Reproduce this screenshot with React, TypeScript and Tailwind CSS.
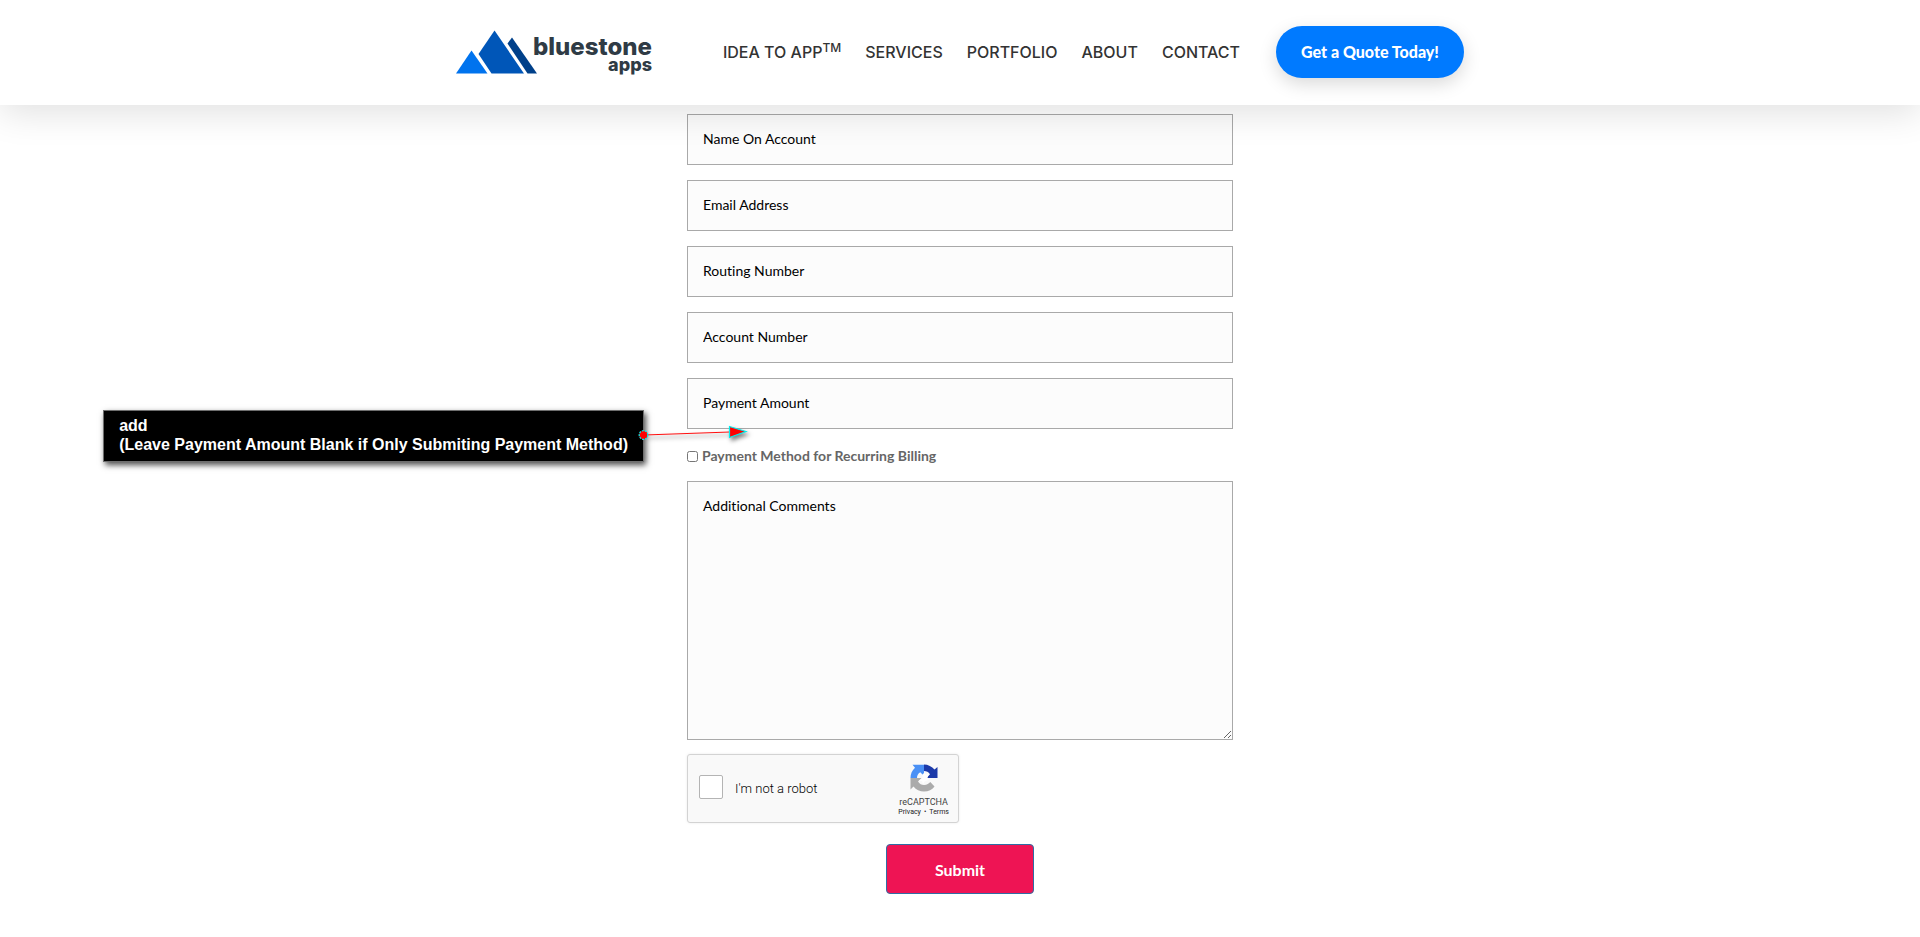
import React from "react";

const fields = [
  { id: "name", label: "Name On Account", type: "text" },
  { id: "email", label: "Email Address", type: "email" },
  { id: "routing", label: "Routing Number", type: "text" },
  { id: "account", label: "Account Number", type: "text" },
];

const control =
  "block w-full border border-[#a9a9a9] bg-[#fcfcfc] px-[15px] text-sm text-black placeholder:text-black placeholder:opacity-100 outline-none";

function Logo() {
  return (
    <a href="#" aria-label="bluestone apps" className="flex shrink-0 text-[#2f3b45]">
      <svg viewBox="0 0 81 44" className="h-11 w-[81px] shrink-0" aria-hidden="true">
        <path d="M0 43.5 15.5 20.5 31.5 43.5Z" fill="#0073ee" />
        <path d="M22.5 24 38.5 0.5 68 43.5H35.5Z" fill="#0056b8" />
        <path d="M51.5 13.5 56 7.5 81 43.5H71.5Z" fill="#00408a" />
      </svg>
      <span className="-ml-1 flex flex-col items-end pt-[7px] font-['Inter'] font-extrabold">
        <span className="text-2xl leading-5">bluestone</span>
        <span className="text-lg leading-4">apps</span>
      </span>
    </a>
  );
}

function Header() {
  const link = "whitespace-nowrap hover:text-[#007aff]";
  return (
    <header className="sticky top-0 z-10 bg-white shadow-[0_8px_34px_rgba(0,0,0,0.12)]">
      <div className="mx-auto flex h-[105px] max-w-[1008px] items-center pb-px">
        <Logo />
        <nav className="mr-9 ml-auto flex gap-6 font-['Inter'] text-base font-medium text-[#333]">
          <a href="#" className={link}>
            IDEA TO APP<sup className="text-xs">TM</sup>
          </a>
          <a href="#" className={link}>SERVICES</a>
          <a href="#" className={link}>PORTFOLIO</a>
          <a href="#" className={link}>ABOUT</a>
          <a href="#" className={link}>CONTACT</a>
        </nav>
        <a
          href="#"
          className="flex h-[52px] w-[188px] shrink-0 items-center justify-center rounded-full bg-[#007aff] text-base font-black text-white shadow-[0_6px_18px_rgba(0,0,0,0.15)]"
        >
          Get a Quote Today!
        </a>
      </div>
    </header>
  );
}

function Note() {
  return (
    <div className="pointer-events-none absolute top-8 right-full mr-[43px] border border-[#6e6e6e] bg-black px-[15px] pt-[5px] pb-[7px] font-['Liberation_Sans'] text-base leading-[19px] font-bold whitespace-nowrap text-white shadow-[2px_3px_6px_rgba(0,0,0,0.7)]">
      <p>add</p>
      <p>(Leave Payment Amount Blank if Only Submiting Payment Method)</p>
      <svg
        viewBox="0 0 120 30"
        className="absolute top-[9px] -right-[115px] h-[30px] w-[120px]"
        aria-hidden="true"
      >
        <g className="drop-shadow-[2px_3px_2px_rgba(0,0,0,0.5)]">
          <path d="M6 15 92 12" stroke="#ff1010" strokeWidth="1.2" />
          <path d="M91.5 6.5 108 11.5 91.5 17.5Z" fill="#f00" stroke="#00f0f0" strokeWidth="1.2" />
        </g>
        <circle cx="5.5" cy="15" r="4.3" fill="#f00" stroke="#00f0f0" strokeWidth="1.2" strokeDasharray="2 1" />
      </svg>
    </div>
  );
}

function Captcha() {
  return (
    <div className="flex h-[69px] w-[272px] items-center rounded-[3px] border border-[#d3d3d3] bg-[#f9f9f9] pr-[9px] pl-[11px] font-['Roboto'] shadow-[0_0_3px_rgba(0,0,0,0.08)]">
      <input
        id="robot"
        type="checkbox"
        className="mb-1 size-6 appearance-none rounded-xs border border-[#b4b4b4] bg-white checked:bg-[#4a90e2]"
      />
      <label htmlFor="robot" className="ml-3 text-[13px] font-light text-black">
        I'm not a robot
      </label>
      <div className="ml-auto flex flex-col items-center pt-1">
        <svg viewBox="0 0 28 28" className="size-7" aria-hidden="true">
          <path d="M14 0.5C18 0.5 22 2.5 24.5 5.5L27.5 3V14H16.5L20 10.3C18.5 8 16.5 7 14 7Z" fill="#1c3aa9" />
          <path d="M0.5 14C0.5 10 2 6.5 5 3.8L2.5 0.8H14V12L10.3 8.2C8 9.5 7 11.5 7 14Z" fill="#4a90f5" />
          <path d="M14 27.5C10 27.5 6 25.8 3.5 22.5L0.5 25.5V14H11.5L8 17.5C9.5 20 11.5 21 14 21C17 21 19 19.5 20.3 18L24.5 22.5C22 25.7 18.5 27.5 14 27.5Z" fill="#ababab" />
          <path d="M12.5 14V10.5L14.5 8.5 16 10.8 19 9.5 17.5 13.5 19 16 15 17 13 20 12 17 8.5 17Z" fill="#fff" />
        </svg>
        <span className="mt-1 text-[9px] leading-3 text-[#444]">reCAPTCHA</span>
        <span className="flex gap-[3px] text-[7px] leading-[9px] text-[#222]">
          <a href="#">Privacy</a>
          <span>•</span>
          <a href="#">Terms</a>
        </span>
      </div>
    </div>
  );
}

export default function App() {
  return (
    <div className="min-h-screen bg-white font-['Lato',sans-serif] [font-variant-ligatures:none]">
      <Header />
      <main className="mx-auto w-full max-w-[546px] pt-[9px] pb-10">
        <form onSubmit={(e) => e.preventDefault()}>
          <div className="flex flex-col gap-[15px]">
            {fields.map((f) => (
              <input
                key={f.id}
                id={f.id}
                type={f.type}
                aria-label={f.label}
                placeholder={f.label}
                className={`${control} h-[51px] pb-[3px]`}
              />
            ))}
            <div className="relative">
              <input
                id="amount"
                type="text"
                aria-label="Payment Amount"
                placeholder="Payment Amount"
                className={`${control} h-[51px] pb-[3px]`}
              />
              <Note />
            </div>
          </div>
          <div className="flex h-[52px] items-center gap-1 pt-[2px]">
            <input id="recurring" type="checkbox" className="m-0 size-[11px]" />
            <label htmlFor="recurring" className="text-sm font-bold text-[#666]">
              Payment Method for Recurring Billing
            </label>
          </div>
          <textarea
            id="comments"
            aria-label="Additional Comments"
            placeholder="Additional Comments"
            className={`${control} h-[259px] resize-y py-[15px] leading-[17px]`}
          />
          <div className="mt-[14px]">
            <Captcha />
          </div>
          <button
            type="submit"
            className="mx-auto mt-[21px] block h-[50px] w-[148px] rounded-[4px] border border-[#2e6da4] bg-[#ee1454] pt-[2px] text-base font-bold text-white"
          >
            Submit
          </button>
        </form>
      </main>
    </div>
  );
}
